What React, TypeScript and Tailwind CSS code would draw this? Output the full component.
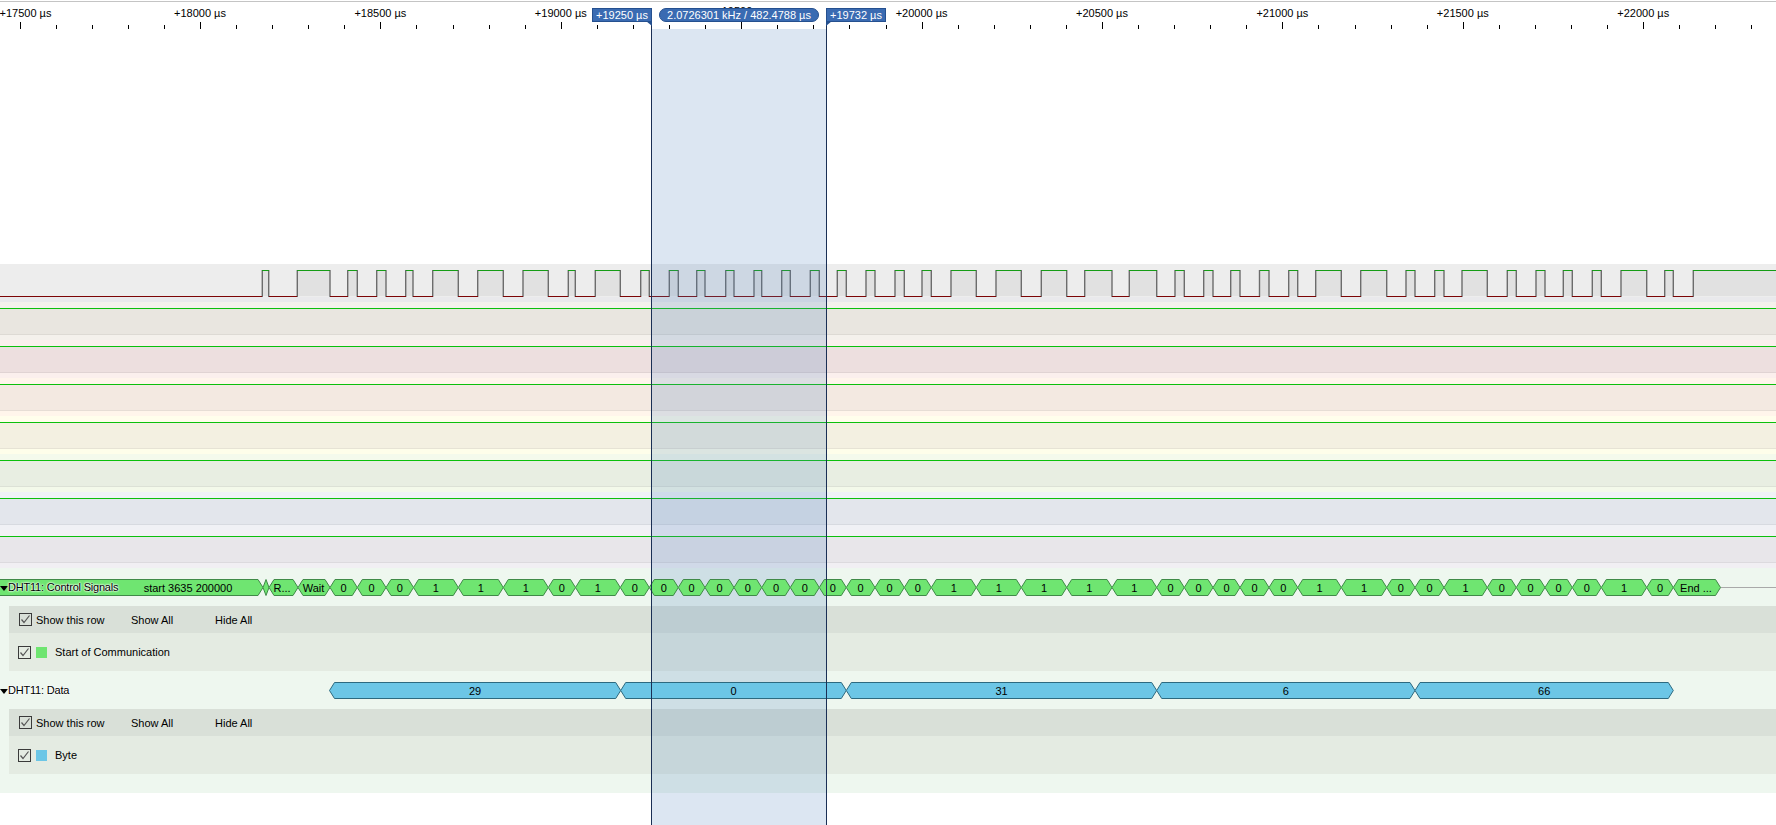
import React from "react";

const FONT = "font-['Liberation_Sans',Arial,sans-serif]";

// rising / falling edges of the DHT11 line, in px
const pulses = [
  [262.3, 268.7], [297.3, 330], [347.7, 357.3], [376.7, 386], [405.7, 413], [432.7, 458.3], [477.7, 503.3],
  [523, 548.3], [568.3, 575.3], [595.3, 620.3], [640.7, 649.3], [669.3, 678.3], [696.7, 705], [725.7, 734],
  [754, 761.7], [781.7, 790.3], [810.3, 819.3], [837.3, 846.3], [866, 875], [895, 904.3], [922, 931.3],
  [951, 976.3], [996, 1021.3], [1041.3, 1066.7], [1084.7, 1112], [1129.3, 1156.7], [1175, 1184.3],
  [1203.7, 1213], [1230.7, 1240], [1259.5, 1269], [1288.7, 1297.7], [1315.7, 1341.3], [1360.7, 1386.7],
  [1406, 1415], [1434.7, 1444], [1462, 1487.3], [1507.3, 1516.3], [1536, 1545], [1563.3, 1572.3],
  [1592.3, 1601.3], [1621, 1646.7], [1664.7, 1673.3], [1693.3, 1790],
];

const bits = [
  [330, 357.3, "0"], [357.3, 386, "0"], [386, 413.5, "0"], [413.5, 458.3, "1"], [458.3, 503.3, "1"], [503.3, 548.3, "1"],
  [548.3, 575.5, "0"], [575.5, 620.3, "1"], [620.3, 649.3, "0"], [649.3, 678.3, "0"], [678.3, 705, "0"], [705, 734, "0"],
  [734, 761.7, "0"], [761.7, 790.3, "0"], [790.3, 819.3, "0"], [819.3, 846.3, "0"], [846.3, 875, "0"], [875, 904.3, "0"],
  [904.3, 931.3, "0"], [931.3, 976.3, "1"], [976.3, 1021.3, "1"], [1021.3, 1066.7, "1"], [1066.7, 1112, "1"], [1112, 1156.7, "1"],
  [1156.7, 1184.3, "0"], [1184.3, 1213, "0"], [1213, 1240, "0"], [1240, 1269, "0"], [1269, 1297.7, "0"], [1297.7, 1341.3, "1"],
  [1341.3, 1386.7, "1"], [1386.7, 1415, "0"], [1415, 1444, "0"], [1444, 1487.3, "1"], [1487.3, 1516.3, "0"], [1516.3, 1545, "0"],
  [1545, 1572.3, "0"], [1572.3, 1601.3, "0"], [1601.3, 1646.7, "1"], [1646.7, 1673.3, "0"],
] as [number, number, string][];

const bytes: [number, number, string][] = [
  [329.5, 620.7, "29"], [620.7, 846.3, "0"], [846.3, 1156.7, "31"], [1156.7, 1415, "6"], [1415, 1673.3, "66"],
];

const channels = [
  { top: "bg-[#f4f1ec]", mid: "bg-[#e9e6e0]", bot: "bg-[#f4f1ec]" },
  { top: "bg-[#fbefed]", mid: "bg-[#eddfdf]", bot: "bg-[#fbefed]" },
  { top: "bg-[#fff5eb]", mid: "bg-[#f3e9e1]", bot: "bg-[#fff5eb]" },
  { top: "bg-[#fffeec]", mid: "bg-[#f3f0e1]", bot: "bg-[#fefeea]" },
  { top: "bg-[#f4faec]", mid: "bg-[#e8eee2]", bot: "bg-[#f3f9ea]" },
  { top: "bg-[#eff2f6]", mid: "bg-[#e3e6ec]", bot: "bg-[#f0f1f5]" },
  { top: "bg-[#f2f1f5]", mid: "bg-[#e8e6ea]", bot: "bg-[#f1eff3]" },
];

function hexPoints(x0: number, x1: number, inset: number) {
  const t = 11.5, b = 27.5, m = 19.5;
  return `${x0},${m} ${x0 + inset},${t} ${x1 - inset},${t} ${x1},${m} ${x1 - inset},${b} ${x0 + inset},${b}`;
}

function Ruler() {
  const ticks = [];
  for (let i = 0; i < 49; i++) {
    const x = Math.round(19.6 + i * 36.08) + 0.5;
    const major = i % 5 === 0;
    ticks.push(<line key={i} x1={x} x2={x} y1={major ? 22 : 25} y2={29} stroke="#000" />);
  }
  const labels = [];
  for (let i = 0; i < 10; i++) {
    const x = i === 0 ? 25.5 : 19.6 + i * 180.4;
    labels.push(
      <text key={i} x={x} y={i === 4 ? 15 : 17} textAnchor="middle" fontSize="11" fill="#000">
        +{17500 + i * 500} µs
      </text>
    );
  }
  return (
    <svg className={`block w-[1776px] h-[29px] ${FONT}`} viewBox="0 0 1776 29">
      <line x1="0" x2="1776" y1="1.5" y2="1.5" stroke="#c4c4c4" />
      {labels}
      {ticks}
    </svg>
  );
}

function Wave() {
  const low = [];
  let prev = 0;
  for (const [a, b] of pulses) {
    low.push([prev, a]);
    prev = b;
  }
  return (
    <svg className="absolute inset-0 w-[1776px] h-[38px]" viewBox="0 0 1776 38">
      {pulses.map(([a, b], i) => (
        <rect key={i} x={a} y={6} width={b - a} height={26} fill="#e1e1e1" />
      ))}
      {pulses.map(([a, b], i) => (
        <g key={i}>
          <line x1={a} x2={a} y1={6} y2={33} stroke="#6c6c6c" strokeWidth="1.4" />
          <line x1={b} x2={b} y1={6} y2={33} stroke="#6c6c6c" strokeWidth="1.4" />
          <line x1={a} x2={b} y1={6.5} y2={6.5} stroke="#159c15" shapeRendering="crispEdges" />
        </g>
      ))}
      {low.map(([a, b], i) => (
        <line key={i} x1={a} x2={b} y1={32.5} y2={32.5} stroke="#7c0505" shapeRendering="crispEdges" />
      ))}
    </svg>
  );
}

function Check() {
  return (
    <div className="w-[13px] h-[13px] border border-[#3a3a3a] shrink-0">
      <svg className="block w-[11px] h-[11px]" viewBox="0 0 11 11">
        <polyline points="1.5,5.5 4,8.5 9.5,1.5" fill="none" stroke="#555" strokeWidth="1.2" />
      </svg>
    </div>
  );
}

function RowHeader({ title, children }: { title: string; children: React.ReactNode }) {
  return (
    <div className="relative z-20 h-[38px]">
      <svg className={`absolute inset-0 w-[1776px] h-[38px] ${FONT}`} viewBox="0 0 1776 38">
        {children}
      </svg>
      <div className="relative flex items-center h-full">
        <svg className="w-[8px] h-[5px] mt-[2px] shrink-0" viewBox="0 0 8 5">
          <polygon points="0,0 8,0 4,5" fill="#000" />
        </svg>
        <span className="text-[11px] tracking-[-0.2px] text-black [text-shadow:0_0_2px_#fff,0_0_2px_#fff,0_0_2px_#fff]">{title}</span>
      </div>
    </div>
  );
}

function ShowRow() {
  return (
    <div className="flex items-center h-[27px] ml-[9px] pl-[10px] bg-[#d9e0d8] text-[11px] text-black">
      <Check />
      <span className="ml-[4px] w-[95px] pt-px">Show this row</span>
      <span className="w-[84px] pt-px">Show All</span>
      <span className="pt-px">Hide All</span>
    </div>
  );
}

function ItemRow({ swatch, label }: { swatch: string; label: string }) {
  return (
    <div className="flex items-center h-[38px] ml-[9px] pl-[9px] bg-[#e4ebe2] text-[11px] text-black">
      <Check />
      <div className={`w-[11px] h-[11px] ml-[5px] mt-[1px] ${swatch}`} />
      <span className="ml-[8px] pt-px">{label}</span>
    </div>
  );
}

function CursorFlag({ text, side }: { text: string; side: "left" | "right" }) {
  return (
    <div className={`absolute z-30 top-[8px] h-[14px] ${side === "left" ? "left-[592px] w-[60px]" : "left-[826px] w-[60px]"}`}>
      <div className="flex items-center justify-center h-full border border-[#25508f] bg-[#3a6bb2] text-[11px] leading-none text-white">
        {text}
      </div>
      <svg className={`absolute top-[13px] w-[6px] h-[5px] ${side === "left" ? "right-0" : "left-0"}`} viewBox="0 0 6 5">
        <polygon points={side === "left" ? "0,0 6,0 6,5" : "0,0 6,0 0,5"} fill="#25508f" />
      </svg>
    </div>
  );
}

export default function App() {
  return (
    <div className={`relative w-[1776px] h-[825px] overflow-hidden bg-white ${FONT}`}>
      <Ruler />
      <div className="h-[235px]" />

      <div className="relative h-[38px]">
        <div className="h-[33px] bg-[#ededed]" />
        <div className="h-[5px] bg-[#e9e9ec]" />
        <Wave />
      </div>

      {channels.map((c, i) => (
        <div key={i} className="h-[38px]">
          <div className={`h-[6px] ${c.top}`} />
          <div className="h-px bg-[#0cc00c]" />
          <div className={`h-[26px] border-b border-black/5 ${c.mid}`} />
          <div className={`h-[5px] ${c.bot}`} />
        </div>
      ))}

      <div className="bg-[#eef7ef] pb-[19px]">
        <RowHeader title="DHT11: Control Signals">
          <polygon points={hexPoints(-10, 263, 5)} fill="#6fe571" stroke="#3f8a47" />
          <polygon points={hexPoints(263, 269, 3)} fill="#6fe571" stroke="#3f8a47" />
          <polygon points={hexPoints(269, 298, 5)} fill="#6fe571" stroke="#3f8a47" />
          <polygon points={hexPoints(298, 330, 5)} fill="#6fe571" stroke="#3f8a47" />
          {bits.map(([a, b], i) => (
            <polygon key={i} points={hexPoints(a, b, 5)} fill="#6fe571" stroke="#3f8a47" />
          ))}
          <polygon points={hexPoints(1673.3, 1720.5, 5)} fill="#6fe571" stroke="#3f8a47" />
          <line x1="1721" x2="1776" y1="19.5" y2="19.5" stroke="#a9a9a9" />
          <g fontSize="11" fill="#000" textAnchor="middle">
            <text x="188" y="23.5">start 3635 200000</text>
            <text x="282" y="23.5">R...</text>
            <text x="313.5" y="23.5">Wait</text>
            {bits.map(([a, b, v], i) => (
              <text key={i} x={(a + b) / 2} y="23.5">{v}</text>
            ))}
            <text x="1696" y="23.5">End ...</text>
          </g>
        </RowHeader>
        <ShowRow />
        <ItemRow swatch="bg-[#6fe571]" label="Start of Communication" />

        <RowHeader title="DHT11: Data">
          {bytes.map(([a, b], i) => (
            <polygon key={i} points={hexPoints(a, b, 5)} fill="#6cc6e6" stroke="#2d6a80" />
          ))}
          <g fontSize="11" fill="#000" textAnchor="middle">
            {bytes.map(([a, b, v], i) => (
              <text key={i} x={(a + b) / 2} y="23.5">{v}</text>
            ))}
          </g>
        </RowHeader>
        <ShowRow />
        <ItemRow swatch="bg-[#6cc6e6]" label="Byte" />
      </div>

      {/* band goes under the decoded rows, the cursor lines over them */}
      <div className="absolute z-10 top-[29px] bottom-0 left-[651px] w-[176px] bg-[#4f81bd]/20" />
      <div className="absolute z-30 top-[22px] bottom-0 left-[651px] w-px bg-[#1a2f55]" />
      <div className="absolute z-30 top-[22px] bottom-0 left-[826px] w-px bg-[#1a2f55]" />
      <CursorFlag side="left" text="+19250 µs" />
      <CursorFlag side="right" text="+19732 µs" />
      <div className="absolute z-30 top-[8px] left-[659px] w-[160px] h-[14px] flex items-center justify-center rounded-full border border-[#25508f] bg-[#3a6bb2] text-[11px] leading-none text-white">
        2.0726301 kHz / 482.4788 µs
      </div>
    </div>
  );
}
